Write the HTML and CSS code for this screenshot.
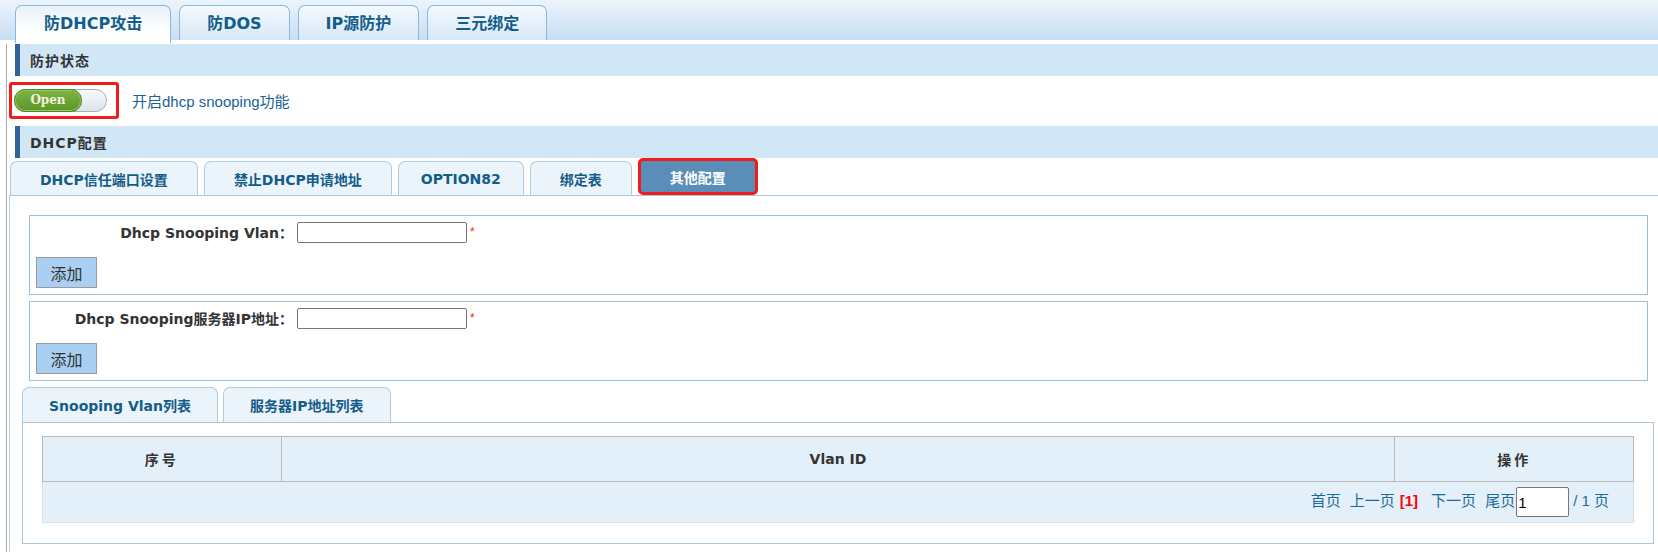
FILE: index.html
```html
<!DOCTYPE html>
<html lang="zh-CN">

<head>
    <meta charset="UTF-8">
    <meta name="viewport" content="width=device-width, initial-scale=1.0">
    <title>防DHCP攻击</title>
    <link rel="stylesheet" href="styles.css">
</head>

<body>
    <div class="top-tabs">
        <a href="#" class="active">防DHCP攻击</a>
        <a href="#">防DOS</a>
        <a href="#">IP源防护</a>
        <a href="#">三元绑定</a>
    </div>

    <div class="main">
        <div class="bar">防护状态</div>
        <div class="switch-row">
            <div class="switch-box">
                <span class="switch"><span class="switch-on">Open</span></span>
            </div>
            <span class="switch-text">开启dhcp snooping功能</span>
        </div>

        <div class="bar bar-second">DHCP配置</div>
        <div class="sub-tabs">
            <a href="#">DHCP信任端口设置</a>
            <a href="#">禁止DHCP申请地址</a>
            <a href="#" class="narrow">OPTION82</a>
            <a href="#">绑定表</a>
            <a href="#" class="active">其他配置</a>
        </div>

        <div class="panel">
            <div class="form-box">
                <div class="form-row">
                    <label>Dhcp Snooping Vlan：</label>
                    <input type="text">
                    <span class="required">*</span>
                </div>
                <button class="btn">添加</button>
            </div>
            <div class="form-box">
                <div class="form-row">
                    <label>Dhcp Snooping服务器IP地址：</label>
                    <input type="text">
                    <span class="required">*</span>
                </div>
                <button class="btn">添加</button>
            </div>

            <div class="list">
                <div class="list-tabs">
                    <a href="#">Snooping Vlan列表</a>
                    <a href="#">服务器IP地址列表</a>
                </div>
                <div class="list-panel">
                    <table>
                        <thead>
                            <tr>
                                <th class="col-side spaced">序号</th>
                                <th>Vlan ID</th>
                                <th class="col-side spaced">操作</th>
                            </tr>
                        </thead>
                        <tbody>
                            <tr>
                                <td colspan="3" class="pager">
                                    <a href="#">首页</a><a href="#">上一页</a><span class="current">[1]</span><a href="#">下一页</a><a href="#">尾页</a><input type="text" value="1"><span class="total">/ 1 页</span>
                                </td>
                            </tr>
                        </tbody>
                    </table>
                </div>
            </div>
        </div>
    </div>
</body>

</html>
```

FILE: styles.css
```css
html,
body {
    overflow: hidden;
}

body {
    margin: 0;
    font-family: "Liberation Sans", "Noto Sans CJK SC", sans-serif;
    font-size: 14px;
    color: #333;
    background-color: #fff;
}

a {
    text-decoration: none;
}

/* top tabs */
.top-tabs {
    height: 40px;
    box-sizing: border-box;
    padding: 5px 0 0 15px;
    display: flex;
    gap: 8px;
    background: linear-gradient(#ecf4fb, #c6def3);
}

.top-tabs a {
    height: 35px;
    box-sizing: border-box;
    padding: 0 27px 3px;
    display: flex;
    align-items: center;
    border: 1px solid #8cb8de;
    border-bottom: none;
    border-radius: 7px 7px 0 0;
    background: linear-gradient(#f4f9fd, #d6e8f7);
    color: #135d8a;
    font: bold 16px "DejaVu Sans", "Noto Sans CJK SC", sans-serif;
}

.top-tabs a.active {
    height: 38px;
    padding: 0 28px 6px;
    background: linear-gradient(#e8f1fa, #fff 70%);
}

.main {
    margin-left: 6px;
    padding-left: 2px;
    border-left: 1px solid #a8a8a8;
}

/* section bars */
.bar {
    margin: 4px 0 0 6px;
    height: 32px;
    display: flex;
    align-items: center;
    padding-left: 10px;
    border-left: 5px solid #2f6399;
    background-color: #d1e7f6;
    font: bold 14px "DejaVu Sans", "Noto Sans CJK SC", sans-serif;
    letter-spacing: 1px;
    color: #333;
}

.bar-second {
    margin-top: 7px;
}

/* switch */
.switch-row {
    display: flex;
    align-items: center;
    gap: 13px;
    margin-top: 6px;
}

.switch-box {
    display: flex;
    padding: 4px 9px 4px 2px;
    border: 3px solid #f21c1c;
    border-radius: 3px;
}

.switch {
    display: flex;
    width: 93px;
    height: 23px;
    box-sizing: border-box;
    border: 1px solid #a3adb5;
    border-radius: 12px;
    background: linear-gradient(#f7f9fb, #dde5eb);
}

.switch-on {
    width: 68px;
    box-sizing: border-box;
    border: 1px solid #4d8624;
    border-radius: 11px;
    margin: -1px 0 -1px -1px;
    background: linear-gradient(#7cb342, #5b9629);
    box-shadow: inset 0 0 0 1px #95c765;
    color: #f5f1d8;
    font: bold 12px "DejaVu Serif", "Liberation Serif", serif;
    line-height: 21px;
    text-align: center;
}

.switch-text {
    font-size: 15px;
    color: #1a6194;
}

/* sub tabs */
.sub-tabs {
    display: flex;
    align-items: flex-end;
    gap: 6px;
    padding-left: 1px;
}

.sub-tabs a {
    height: 34px;
    box-sizing: border-box;
    padding: 0 29px;
    display: flex;
    align-items: center;
    border: 1px solid #afcbe1;
    border-bottom: none;
    border-radius: 7px 7px 0 0;
    background-color: #ebf4fb;
    color: #145c88;
    font: bold 14px "DejaVu Sans", "Noto Sans CJK SC", sans-serif;
}

.sub-tabs a.narrow {
    padding: 0 22px;
}

.sub-tabs a.active {
    height: 37px;
    padding: 0 29px;
    border: 3px solid #f01b1b;
    border-radius: 5px;
    background-color: #5a8db8;
    color: #fff;
}

.panel {
    padding: 19px 10px 8px 19px;
    border-top: 1px solid #a9c7df;
    border-left: 1px solid #b7d1e5;
}

/* forms */
.form-box {
    padding: 6px 0 6px 6px;
    border: 1px solid #9dbdd6;
}

.form-box + .form-box {
    margin-top: 6px;
}

.form-row {
    display: flex;
    align-items: flex-start;
}

.form-row label {
    width: 257px;
    margin-right: 4px;
    line-height: 21px;
    text-align: right;
    font: bold 14px "DejaVu Sans", "Noto Sans CJK SC", sans-serif;
    color: #333;
}

.form-row input {
    width: 170px;
    height: 21px;
    box-sizing: border-box;
    border: 1px solid #767676;
    border-radius: 2px;
    padding: 0 3px;
    margin: 0;
}

.required {
    margin: 3px 0 0 3px;
    color: #f22;
    font-size: 12px;
    line-height: 14px;
}

.btn {
    display: block;
    width: 61px;
    height: 31px;
    margin-top: 14px;
    padding: 0;
    border: 1px solid #9a9a9a;
    background-color: #a9cff2;
    color: #333;
    font: 16px "Noto Sans CJK SC", sans-serif;
}

/* list */
.list {
    margin: 6px -6px 0 -7px;
}

.list-tabs {
    display: flex;
    gap: 5px;
}

.list-tabs a {
    height: 35px;
    box-sizing: border-box;
    padding: 0 26px;
    display: flex;
    align-items: center;
    border: 1px solid #afcbe1;
    border-bottom: none;
    border-radius: 7px 7px 0 0;
    background-color: #ebf4fb;
    color: #145c88;
    font: bold 14px "DejaVu Sans", "Noto Sans CJK SC", sans-serif;
}

.list-panel {
    padding: 13px 19px 20px 19px;
    border: 1px solid #a9c6dc;
}

table {
    width: 100%;
    border-collapse: collapse;
}

th {
    height: 42px;
    border: 1px solid #b9b9b9;
    background-color: #e3f0fa;
    font: bold 14px "DejaVu Sans", "Noto Sans CJK SC", sans-serif;
    color: #333;
}

th.col-side {
    width: 15%;
}

th.spaced {
    letter-spacing: 3px;
}

td.pager {
    height: 40px;
    padding: 0 24px 0 0;
    border: 1px solid #d5e2ec;
    background-color: #e3f0fa;
    text-align: right;
    font-size: 15px;
    color: #1d6a99;
}

.pager a {
    color: #1d6a99;
    margin-left: 9px;
}

.pager .current {
    color: #f00;
    font-weight: bold;
    margin: 0 4px 0 5px;
}

.pager input {
    width: 53px;
    height: 30px;
    box-sizing: border-box;
    margin: 0 0 0 1px;
    padding: 0 1px;
    border: 1px solid #767676;
    border-radius: 2px;
    font-size: 15px;
    vertical-align: middle;
}

.pager .total {
    margin-left: 4px;
}
```
